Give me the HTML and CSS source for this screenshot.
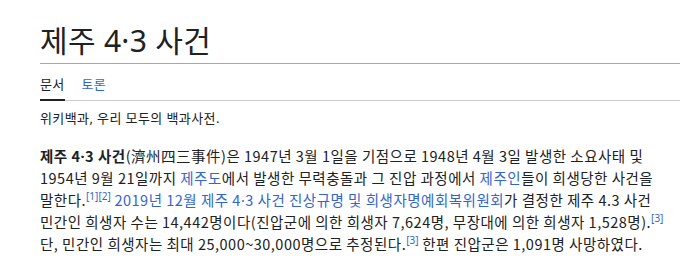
FILE: index.html
```html
<!DOCTYPE HTML>
<html>
<head>
  <meta charset="utf-8">
  <title>제주 4·3 사건 - 위키백과</title>
  <link rel="stylesheet" href="styles.css">
</head>
<body>
  <div class="page">
    <h1 class="title">제주 4·3 사건</h1>

    <div class="tabs">
      <a class="tab selected" href="#">문서</a>
      <a class="tab" href="#">토론</a>
    </div>

    <div class="tagline">위키백과, 우리 모두의 백과사전.</div>

    <p class="lead">
      <b>제주 4<span class="dot">·</span>3 사건</b>(濟州四三事件)은 1947년 3월 1일을 기점으로 1948년 4월 3일 발생한 소요사태 및<br>
      1954년 9월 21일까지 <a href="#">제주도</a>에서 발생한 무력충돌과 그 진압 과정에서 <a href="#">제주인</a>들이 희생당한 사건을<br>
      말한다.<sup><a href="#">[1]</a><a href="#">[2]</a></sup> <a href="#">2019년</a> <a href="#">12월</a> <a href="#">제주 4<span class="dot">·</span>3 사건 진상규명 및 희생자명예회복위원회</a>가 결정한 제주 4.3 사건<br>
      민간인 희생자 수는 14,442명이다(진압군에 의한 희생자 7,624명, 무장대에 의한 희생자 1,528명).<sup><a href="#">[3]</a></sup><br>
      단, 민간인 희생자는 최대 25,000~30,000명으로 추정된다.<sup><a href="#">[3]</a></sup> 한편 진압군은 1,091명 사망하였다.
    </p>
  </div>
</body>
</html>
```

FILE: styles.css
```css
body {
  margin: 0;
  background-color: #fff;
  color: #202122;
  font-family: "Noto Sans", "Noto Sans CJK KR", sans-serif;
}

a {
  color: #3366cc;
  text-decoration: none;
}

.page {
  padding: 20px 0 0 40px;
}

.title {
  margin: 0;
  padding-bottom: 2px;
  font-size: 30px;
  font-weight: normal;
  line-height: 41px;
  letter-spacing: 0.3px;
  border-bottom: 1px solid #a2a9b1;
}

.tabs {
  display: flex;
  gap: 17px;
  border-bottom: 1px solid #c8ccd1;
}

.tab {
  padding: 11px 0 5px;
  font-size: 13px;
  line-height: 19px;
  letter-spacing: 0.3px;
  border-bottom: 2px solid transparent;
  margin-bottom: -1px;
}

.tab.selected {
  color: #202122;
  border-bottom-color: #202122;
}

.tagline {
  margin-top: 7px;
  font-size: 13px;
  line-height: 20px;
  letter-spacing: 0.4px;
}

.lead {
  margin: 17px 0 0;
  font-family: "Noto Sans CJK KR", "Noto Sans", sans-serif;
  font-size: 14.5px;
  line-height: 22px;
  letter-spacing: 0.5px;
  white-space: nowrap;
}

.dot {
  font-family: "Noto Sans", sans-serif;
}

sup {
  font-family: "Noto Sans", sans-serif;
  font-size: 10px;
  line-height: 1;
  letter-spacing: 0;
  vertical-align: 6px;
}
```
